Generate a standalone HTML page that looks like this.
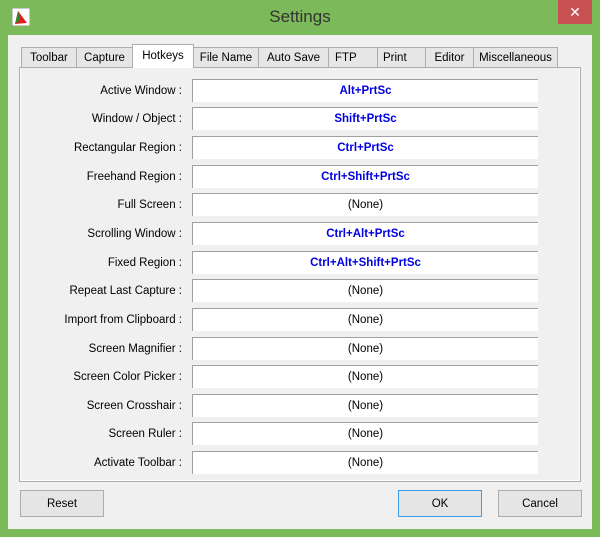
<html><head><style>
body{margin:0;width:600px;height:537px;background:#7cb95a;font-family:"Liberation Sans",sans-serif;font-size:11.5px;position:relative;overflow:hidden}
.t{position:absolute;left:0;top:7px;width:600px;text-align:center;font-size:17px;color:#333}
.x{position:absolute;left:558px;top:0;width:34px;height:24px;background:#c75050;color:#fff;text-align:center;font-size:14px;line-height:24px}
.c{position:absolute;left:8px;top:35px;width:584px;height:494px;background:#f0f0f0}
.tab{position:absolute;top:47px;height:20px;border:1px solid #adadad;border-bottom:none;background:#e6e6e6;line-height:21px;text-align:center;box-sizing:border-box;color:#000}
.panel{position:absolute;left:19px;top:67px;width:562px;height:415px;background:#fff;border:1px solid #adadad;box-sizing:border-box}
.panel2{position:absolute;left:21px;top:68px;width:558px;height:412px;background:#f0f0f0}
.l{position:absolute;left:20px;width:162px;text-align:right;line-height:24px}
.f{position:absolute;left:192px;width:346px;height:23px;background:#fff;border-top:1px solid #a0a0a0;border-left:1px solid #a0a0a0;box-sizing:border-box;text-align:center;line-height:22px}
.b{color:#0000e0;font-weight:bold}
.btn{position:absolute;top:490px;height:27px;border:1px solid #adadad;background:#e5e5e5;box-sizing:border-box;text-align:center;line-height:26px}
</style></head><body>
<svg style="position:absolute;left:12px;top:8px" width="18" height="18"><rect x="0" y="0" width="18" height="18" fill="#fff" stroke="#999"/><path d="M3 16 L6 3 L15 15 Z" fill="#e02020"/><path d="M3 16 L6 3 L8 12 Z" fill="#2a8a2a"/></svg>
<div class="t">Settings</div>
<div class="x">✕</div>
<div class="c"></div>
<div class="tab" style="left:21px;width:56px">Toolbar</div>
<div class="tab" style="left:76px;width:57px">Capture</div>
<div class="tab" style="left:193px;width:66px">File Name</div>
<div class="tab" style="left:258px;width:71px">Auto Save</div>
<div class="tab" style="left:328px;width:50px;text-align:left;padding-left:6px">FTP</div>
<div class="tab" style="left:377px;width:49px;text-align:left;padding-left:5px">Print</div>
<div class="tab" style="left:425px;width:49px">Editor</div>
<div class="tab" style="left:473px;width:85px">Miscellaneous</div>
<div class="panel"></div>
<div class="panel2"></div>
<div class="tab" style="left:132px;top:44px;height:24px;width:62px;background:#fff;line-height:22px;z-index:2">Hotkeys</div>
<div style="position:absolute;top:0;left:0">
<div class="l" style="top:79px">Active Window :</div><div class="f b" style="top:79px">Alt+PrtSc</div>
<div class="l" style="top:107px">Window / Object :</div><div class="f b" style="top:107px">Shift+PrtSc</div>
<div class="l" style="top:136px">Rectangular Region :</div><div class="f b" style="top:136px">Ctrl+PrtSc</div>
<div class="l" style="top:165px">Freehand Region :</div><div class="f b" style="top:165px">Ctrl+Shift+PrtSc</div>
<div class="l" style="top:193px">Full Screen :</div><div class="f" style="top:193px">(None)</div>
<div class="l" style="top:222px">Scrolling Window :</div><div class="f b" style="top:222px">Ctrl+Alt+PrtSc</div>
<div class="l" style="top:251px">Fixed Region :</div><div class="f b" style="top:251px">Ctrl+Alt+Shift+PrtSc</div>
<div class="l" style="top:279px">Repeat Last Capture :</div><div class="f" style="top:279px">(None)</div>
<div class="l" style="top:308px">Import from Clipboard :</div><div class="f" style="top:308px">(None)</div>
<div class="l" style="top:337px">Screen Magnifier :</div><div class="f" style="top:337px">(None)</div>
<div class="l" style="top:365px">Screen Color Picker :</div><div class="f" style="top:365px">(None)</div>
<div class="l" style="top:394px">Screen Crosshair :</div><div class="f" style="top:394px">(None)</div>
<div class="l" style="top:422px">Screen Ruler :</div><div class="f" style="top:422px">(None)</div>
<div class="l" style="top:451px">Activate Toolbar :</div><div class="f" style="top:451px">(None)</div>
</div>
<div class="btn" style="left:20px;width:84px">Reset</div>
<div class="btn" style="left:398px;width:84px;border-color:#3c9be8">OK</div>
<div class="btn" style="left:498px;width:84px">Cancel</div>
</body></html>
